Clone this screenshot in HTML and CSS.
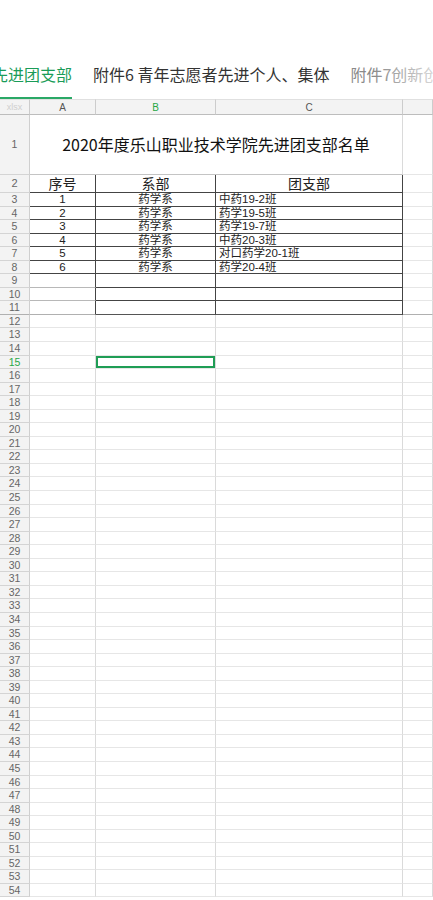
FILE: index.html
```html
<!DOCTYPE html>
<html lang="zh-CN">
<head>
<meta charset="utf-8">
<title>先进团支部</title>
<link rel="stylesheet" href="styles.css">
</head>
<body>
<div class="tabs">
  <div class="tab active">先进团支部</div>
  <div class="tab">附件6 青年志愿者先进个人、集体</div>
  <div class="tab dim">附件7创新创业先进个人</div>
  <div class="fade"></div>
</div>
<div class="sheet" id="sheet">
  <div class="row colhead">
    <div class="rh corner">xlsx</div><div class="c">A</div><div class="c green">B</div><div class="c">C</div><div class="c"></div>
  </div>
  <div class="row r1">
    <div class="rh">1</div><div class="c title">2020年度乐山职业技术学院先进团支部名单</div><div class="c"></div>
  </div>
  <div class="row r2">
    <div class="rh">2</div><div class="c b ctr">序号</div><div class="c b ctr">系部</div><div class="c b ctr">团支部</div><div class="c"></div>
  </div>
  <div class="row">
    <div class="rh">3</div><div class="c b ctr">1</div><div class="c b ctr">药学系</div><div class="c b">中药19-2班</div><div class="c"></div>
  </div>
  <div class="row">
    <div class="rh">4</div><div class="c b ctr">2</div><div class="c b ctr">药学系</div><div class="c b">药学19-5班</div><div class="c"></div>
  </div>
  <div class="row">
    <div class="rh">5</div><div class="c b ctr">3</div><div class="c b ctr">药学系</div><div class="c b">药学19-7班</div><div class="c"></div>
  </div>
  <div class="row">
    <div class="rh">6</div><div class="c b ctr">4</div><div class="c b ctr">药学系</div><div class="c b">中药20-3班</div><div class="c"></div>
  </div>
  <div class="row">
    <div class="rh">7</div><div class="c b ctr">5</div><div class="c b ctr">药学系</div><div class="c b">对口药学20-1班</div><div class="c"></div>
  </div>
  <div class="row">
    <div class="rh">8</div><div class="c b ctr">6</div><div class="c b ctr">药学系</div><div class="c b">药学20-4班</div><div class="c"></div>
  </div>
  <div class="row">
    <div class="rh">9</div><div class="c g"></div><div class="c b"></div><div class="c b"></div><div class="c"></div>
  </div>
  <div class="row">
    <div class="rh">10</div><div class="c g"></div><div class="c b"></div><div class="c b"></div><div class="c"></div>
  </div>
  <div class="row last">
    <div class="rh">11</div><div class="c g"></div><div class="c b"></div><div class="c b"></div><div class="c"></div>
  </div>
</div>
<script src="script.js"></script>
</body>
</html>
```

FILE: styles.css
```css
html, body {
  margin: 0;
  padding: 0;
  background: #ffffff;
}
body {
  width: 433px;
  height: 900px;
  overflow: hidden;
  font-family: "Noto Sans CJK SC", "Noto Sans", sans-serif;
  color: #222;
}
.tabs {
  position: relative;
  height: 99px;
  display: flex;
  gap: 21px;
  margin-left: -8px;
  white-space: nowrap;
  overflow: hidden;
}
.tab {
  box-sizing: border-box;
  height: 99px;
  padding-top: 63px;
  font-size: 16px;
  line-height: 22px;
  color: #333;
  flex: none;
}
.tab.active {
  color: #1a9c58;
  border-bottom: 2px solid #2aa866;
}
.tab.dim {
  color: #8a8a8a;
}
.fade {
  position: absolute;
  right: 0;
  top: 55px;
  width: 60px;
  height: 40px;
  background: linear-gradient(to right, rgba(255,255,255,0), rgba(255,255,255,0.65));
}
.sheet {
  display: flex;
  flex-direction: column;
}
.row {
  display: grid;
  grid-template-columns: 30px 66px 120px 187px 30px;
  height: 13.55px;
  font-family: "Liberation Sans", "Noto Sans CJK SC", sans-serif;
}
.row > div {
  box-sizing: border-box;
  border-right: 1px solid #dadada;
  border-bottom: 1px solid #e6e6e6;
  overflow: hidden;
  white-space: nowrap;
}
.rh {
  background: #f3f3f3;
  color: #666;
  font-size: 10.5px;
  line-height: 13px;
  text-align: center;
  border-right-color: #cfcfcf !important;
  border-bottom-color: #d4d4d4 !important;
}
.rh.green {
  color: #28a745;
}
.colhead {
  height: 16px;
}
.colhead > div {
  background: #f3f3f3;
  color: #555;
  font-size: 10px;
  line-height: 15px;
  text-align: center;
  border-top: 1px solid #e0e0e0;
  border-bottom-color: #bdbdbd !important;
  border-right-color: #cccccc !important;
}
.colhead .corner {
  color: #cfcfcf;
  font-size: 9px;
}
.colhead .c.green {
  color: #28a745;
}
.r1 {
  height: 60px;
}
.r1 .rh {
  line-height: 58px;
}
.c {
  font-size: 11.5px;
  line-height: 13px;
  color: #222;
}
.c.title {
  grid-column: span 3;
  font-family: "Noto Sans CJK SC", sans-serif;
  font-size: 16px;
  line-height: 58px;
  text-align: center;
  color: #111;
  border-bottom-color: #c4c4c4 !important;
}
.r2 {
  height: 18px;
}
.r2 .rh {
  line-height: 17px;
  font-size: 11px;
}
.r2 .c.b {
  font-family: "Noto Sans CJK SC", sans-serif;
  font-size: 14px;
  line-height: 17px;
  overflow: visible;
}
.c.b {
  border-right-color: #444 !important;
  border-bottom-color: #444 !important;
  padding-left: 3px;
}
.c.ctr {
  text-align: center;
  padding-left: 0;
}
.c.g {
  border-right-color: #444 !important;
  border-bottom-color: #b8b8b8 !important;
}
.row.last > div {
  border-bottom-color: #b0b0b0 !important;
}
.row.last .c.b {
  border-bottom-color: #555 !important;
}
.sel {
  box-shadow: inset 0 0 0 2px #1f9d55;
}
```

FILE: script.js
```js
(function () {
  var sheet = document.getElementById('sheet');
  for (var i = 12; i <= 54; i++) {
    var row = document.createElement('div');
    row.className = 'row';
    var rh = document.createElement('div');
    rh.className = 'rh' + (i === 15 ? ' green' : '');
    rh.textContent = String(i);
    row.appendChild(rh);
    for (var j = 0; j < 4; j++) {
      var c = document.createElement('div');
      c.className = 'c' + (i === 15 && j === 1 ? ' sel' : '');
      row.appendChild(c);
    }
    sheet.appendChild(row);
  }
})();
```
